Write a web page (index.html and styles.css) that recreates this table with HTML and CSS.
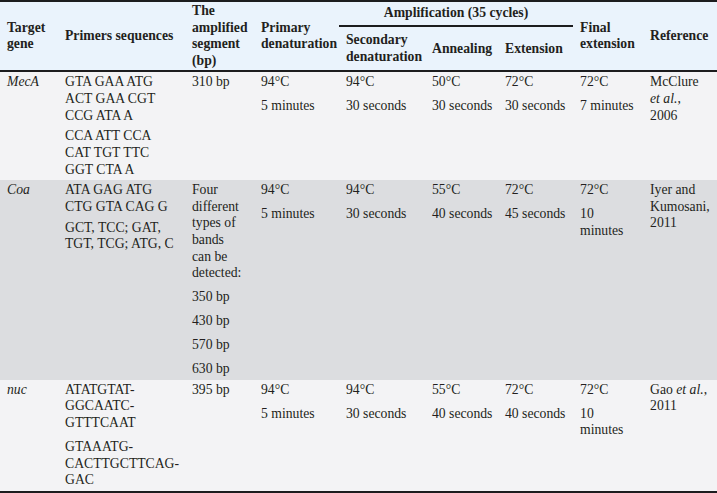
FILE: index.html
```html
<!DOCTYPE html>
<html lang="en">
<head>
<meta charset="utf-8">
<title>PCR conditions</title>
<link rel="stylesheet" href="styles.css">
</head>
<body>
<table class="pcr">
  <colgroup>
    <col class="c1"><col class="c2"><col class="c3"><col class="c4"><col class="c5"><col class="c6"><col class="c7"><col class="c8"><col class="c9">
  </colgroup>
  <thead>
    <tr>
      <th rowspan="2" class="hmain">Target gene</th>
      <th rowspan="2" class="hmain">Primers sequences</th>
      <th rowspan="2" class="hmain">The amplified segment (bp)</th>
      <th rowspan="2" class="hmain">Primary denaturation</th>
      <th colspan="3" class="hgroup">Amplification (35 cycles)</th>
      <th rowspan="2" class="hmain">Final extension</th>
      <th rowspan="2" class="hmain">Reference</th>
    </tr>
    <tr>
      <th class="hsub">Secondary denaturation</th>
      <th class="hsub">Annealing</th>
      <th class="hsub">Extension</th>
    </tr>
  </thead>
  <tbody>
    <tr class="light">
      <td><i>MecA</i></td>
      <td><p>GTA GAA ATG ACT GAA CGT CCG ATA A</p><p class="near">CCA ATT CCA CAT TGT TTC GGT CTA A</p></td>
      <td><p>310 bp</p></td>
      <td><p>94°C</p><p class="far">5 minutes</p></td>
      <td><p>94°C</p><p class="far nw">30 seconds</p></td>
      <td><p>50°C</p><p class="far nw">30 seconds</p></td>
      <td><p>72°C</p><p class="far nw">30 seconds</p></td>
      <td><p>72°C</p><p class="far nw">7 minutes</p></td>
      <td><p>McClure <i>et al.</i>, 2006</p></td>
    </tr>
    <tr class="dark">
      <td><i>Coa</i></td>
      <td><p>ATA GAG ATG CTG GTA CAG G</p><p class="near">GCT, TCC; GAT, TGT, TCG; ATG, C</p></td>
      <td><p>Four different types of bands can be detected:</p><p class="far">350 bp</p><p class="far">430 bp</p><p class="far">570 bp</p><p class="far">630 bp</p></td>
      <td><p>94°C</p><p class="far">5 minutes</p></td>
      <td><p>94°C</p><p class="far nw">30 seconds</p></td>
      <td><p>55°C</p><p class="far nw">40 seconds</p></td>
      <td><p>72°C</p><p class="far nw">45 seconds</p></td>
      <td><p>72°C</p><p class="far">10 minutes</p></td>
      <td><p>Iyer and Kumosani, 2011</p></td>
    </tr>
    <tr class="light">
      <td><i>nuc</i></td>
      <td><p>ATATGTAT-GGCAATC-GTTTCAAT</p><p class="far">GTAAATG-CACTTGCTTCAG-GAC</p></td>
      <td><p>395 bp</p></td>
      <td><p>94°C</p><p class="far">5 minutes</p></td>
      <td><p>94°C</p><p class="far nw">30 seconds</p></td>
      <td><p>55°C</p><p class="far nw">40 seconds</p></td>
      <td><p>72°C</p><p class="far nw">40 seconds</p></td>
      <td><p>72°C</p><p class="far">10 minutes</p></td>
      <td><p>Gao <i>et al.</i>, 2011</p></td>
    </tr>
  </tbody>
</table>
</body>
</html>
```
FILE: styles.css
```css
html, body {
  margin: 0;
  padding: 0;
  overflow: hidden;
  background: #ffffff;
}

.pcr {
  width: 717px;
  table-layout: fixed;
  border-collapse: separate;
  border-spacing: 0;
  border-top: 2px solid #1c1c1e;
  border-bottom: 2px solid #1c1c1e;
  font-family: "Liberation Serif", "Times New Roman", serif;
  font-size: 13.7px;
  line-height: 16.6px;
  color: #231f20;
}

.c1 { width: 58px; }
.c2 { width: 127px; }
.c3 { width: 69px; }
.c4 { width: 85px; }
.c5 { width: 86px; }
.c6 { width: 73px; }
.c7 { width: 75px; }
.c8 { width: 70px; }
.c9 { width: 74px; }

.pcr th {
  background: #eaf3fc;
  font-weight: bold;
  text-align: left;
  padding: 1px 8px 1px 7px;
  vertical-align: middle;
}

.pcr .hmain,
.pcr .hsub {
  border-bottom: 2px solid #1c1c1e;
}

.pcr .hgroup {
  text-align: center;
  padding: 1px 0 1.5px 0;
  border-bottom: 2px solid #1c1c1e;
}

.pcr td {
  padding: 2px 8px 2px 7px;
  vertical-align: top;
}

.pcr p {
  margin: 0;
}

.pcr p.near {
  margin-top: 4.3px;
}

.pcr p.far {
  margin-top: 7.4px;
}

.pcr p.nw {
  white-space: nowrap;
}

.light td {
  background: #f3f3f5;
}

.dark td {
  background: #dcdde0;
}
```
